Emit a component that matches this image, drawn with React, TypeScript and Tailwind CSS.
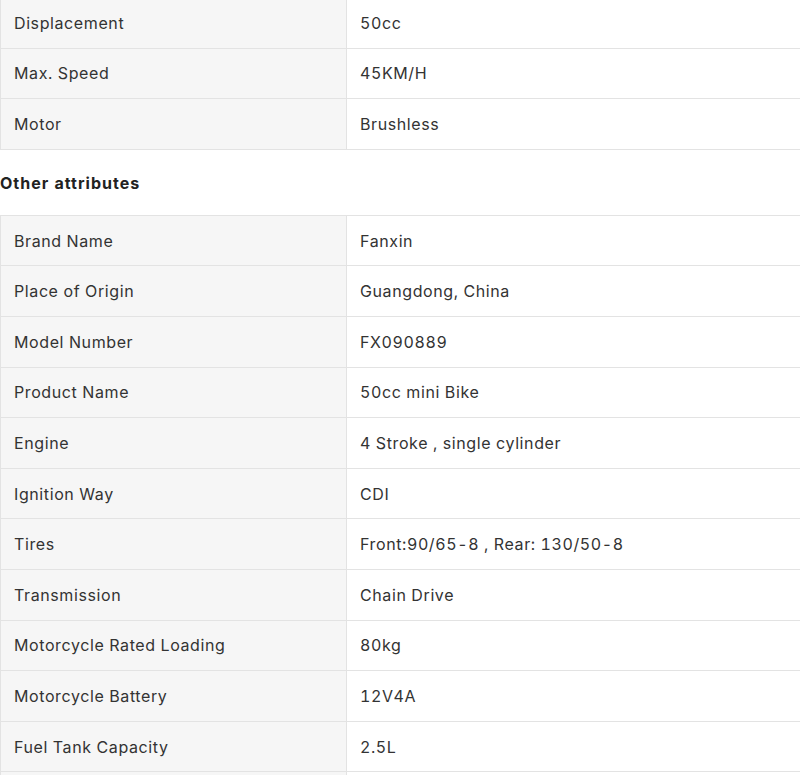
const mainSpecs = [
  ["Displacement", "50cc"],
  ["Max. Speed", "45KM/H"],
  ["Motor", "Brushless"],
];

const otherAttributes = [
  ["Brand Name", "Fanxin"],
  ["Place of Origin", "Guangdong, China"],
  ["Model Number", "FX090889"],
  ["Product Name", "50cc mini Bike"],
  ["Engine", "4 Stroke , single cylinder"],
  ["Ignition Way", "CDI"],
  ["Tires", "Front:90/65-8 , Rear: 130/50-8"],
  ["Transmission", "Chain Drive"],
  ["Motorcycle Rated Loading", "80kg"],
  ["Motorcycle Battery", "12V4A"],
  ["Fuel Tank Capacity", "2.5L"],
  ["", ""],
];

function AttrTable({ rows }: { rows: string[][] }) {
  return (
    <div className="border-l border-t border-[#e3e3e3]">
      {rows.map(([label, value], i) => (
        <div key={i} className="flex h-[50.6px] border-b border-[#e3e3e3]">
          <div className="w-[346px] shrink-0 flex items-center px-[13px] bg-[#f6f6f6] border-r border-[#e3e3e3]">
            {label}
          </div>
          <div className="flex-1 flex items-center px-[13px] bg-white">{value}</div>
        </div>
      ))}
    </div>
  );
}

export default function App() {
  return (
    <div
      className="w-[800px] h-[775px] overflow-hidden bg-white text-[16px] text-[#333333] tracking-[0.6px] tabular-nums"
      style={{ fontFamily: "Inter, 'Noto Sans', sans-serif" }}
    >
      <div className="-mt-[3px]">
        <AttrTable rows={mainSpecs} />
      </div>
      <h3 className="mt-[21px] mb-[20px] leading-6 font-bold tracking-[1px] text-[#222222]">Other attributes</h3>
      <AttrTable rows={otherAttributes} />
    </div>
  );
}
